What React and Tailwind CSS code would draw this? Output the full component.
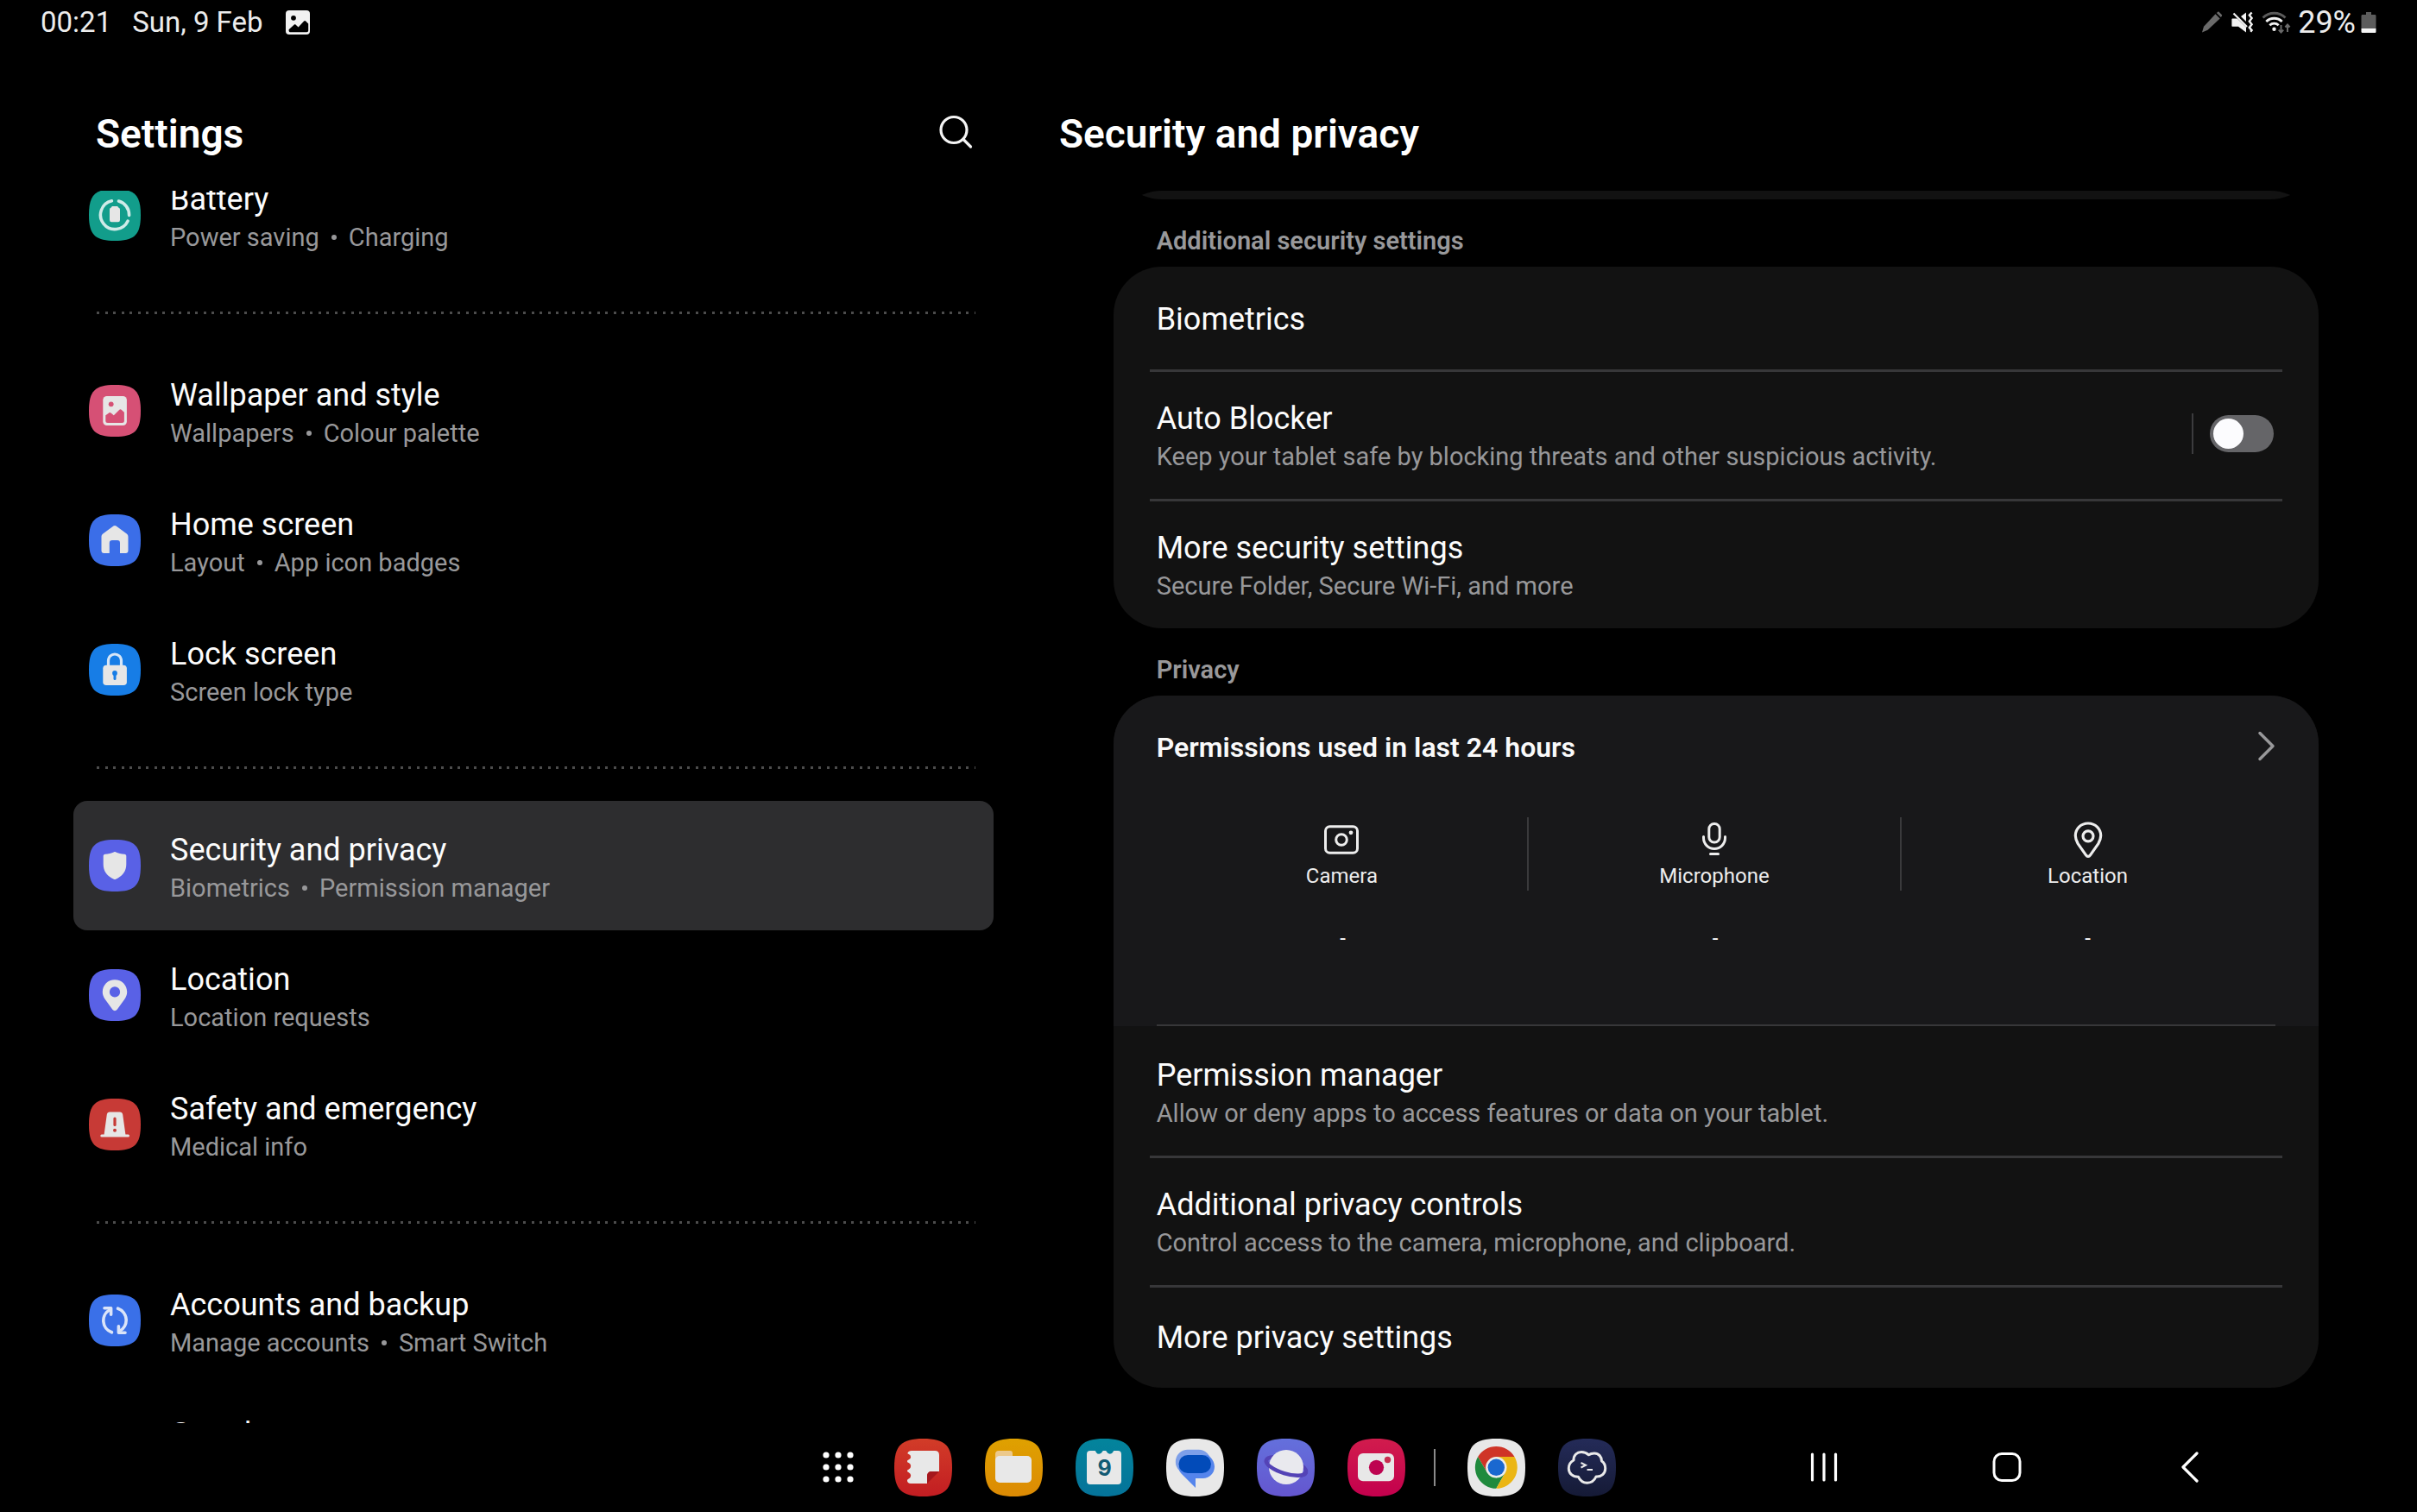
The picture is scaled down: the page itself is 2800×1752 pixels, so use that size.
import React, { useState } from "react";

const SQUIRCLE = "M30 0C7 0 0 7 0 30s7 30 30 30 30-7 30-30S53 0 30 0z";

function Tile({ color, children }) {
  return (
    <svg viewBox="0 0 60 60" className="h-[60px] w-[60px] shrink-0" aria-hidden="true">
      <path d={SQUIRCLE} fill={color} />
      {children}
    </svg>
  );
}

const INK = "#e6e6e6";

const BatteryIcon = () => (
  <Tile color="#129d8b">
    <g fill="none" stroke="#cfebe8" strokeWidth="3.6" strokeLinecap="round">
      <path d="M34.5 14A16.6 16.6 0 0 1 46.6 30.5" />
      <path d="M45 37.2A16.6 16.6 0 1 1 26.4 13.8" />
    </g>
    <path d="M27.5 20h5c.8 0 1.4.6 1.4 1.3C35.3 21.7 36 22.6 36 24v12a2.2 2.2 0 0 1-2.2 2.2h-7.6A2.2 2.2 0 0 1 24 36V24c0-1.400.7-2.300 2.100-2.700 0-.7.600-1.300 1.400-1.300z" fill={INK} />
  </Tile>
);

const WallpaperIcon = () => (
  <Tile color="#d65075">
    <rect x="16.3" y="13" width="27.6" height="34" rx="4.5" fill={INK} />
    <circle cx="25.7" cy="22.3" r="2.9" fill="#d65075" />
    <path d="M19.3 35.2l3.9-2.700c.8-.6 1.600-.5 2.300.1l3.300 2.600 6.300-6.300c.8-.8 1.700-.8 2.500-.1l3.300 3V41.500a2.500 2.500 0 0 1-2.500 2.500H21.800a2.500 2.500 0 0 1-2.500-2.500z" fill="#d65075" />
  </Tile>
);

const HomeIcon = () => (
  <Tile color="#3b6ee8">
    <path d="M31.6 13.6l12.2 9c1.100.9 1.700 2 1.700 3.400v16c0 2-1 3-3 3H36V33.200c0-2-1-3.200-3-3.200h-6c-2 0-3.200 1.200-3.200 3.200V45h-6.300c-2 0-3-1-3-3V26c0-1.400.6-2.500 1.700-3.400l12.200-9c1-.8 2.200-.8 3.200 0z" fill={INK} />
  </Tile>
);

const LockIcon = () => (
  <Tile color="#177de6">
    <path d="M22.5 26v-6.500a7.500 7.500 0 0 1 15 0V26" fill="none" stroke="#d6e6f8" strokeWidth="3.2" />
    <rect x="16.3" y="24.7" width="27.6" height="23.3" rx="3.8" fill={INK} />
    <circle cx="30" cy="34" r="2.9" fill="#177de6" />
    <path d="M30 34v6.500" stroke="#177de6" strokeWidth="3" strokeLinecap="round" />
  </Tile>
);

const ShieldIcon = () => (
  <Tile color="#5961e6">
    <path d="M30.8 14.200c3.300 1.500 6.700 2.300 10.300 2.600 1.400.1 2.200.9 2.200 2.200v9.500c0 8.300-4.700 13.800-12.200 17.300-.8.300-1.400.3-2.200 0C21.400 42.300 16.700 36.800 16.700 28.500V19c0-1.300.8-2.100 2.200-2.200 3.600-.3 7-1.100 10.300-2.600.6-.3 1-.3 1.600 0z" fill={INK} />
  </Tile>
);

const PinIcon = () => (
  <Tile color="#5961e6">
    <path fillRule="evenodd" d="M30 12.200c8 0 14.200 6.200 14.200 14 0 3.300-1.100 6-3 8.900l-8.500 11.600c-1.500 1.900-3.900 1.900-5.400 0l-8.500-11.600c-1.900-2.900-3-5.600-3-8.900 0-7.800 6.200-14 14.200-14zm0 8.100a6.100 6.100 0 1 0 0 12.200 6.100 6.100 0 0 0 0-12.200z" fill={INK} />
  </Tile>
);

const SirenIcon = () => (
  <Tile color="#c73a36">
    <path d="M24.300 15.600h11.400c2 0 3.200 1 3.500 3l3.200 22.900h3.100a1.500 1.500 0 0 1 0 3H14.800a1.500 1.500 0 0 1 0-3h2.800l3.200-22.900c.3-2 1.500-3 3.500-3z" fill={INK} />
    <path d="M30 23v7.500" stroke="#c73a36" strokeWidth="3.2" strokeLinecap="round" />
    <circle cx="30" cy="36.7" r="2" fill="#c73a36" />
  </Tile>
);

const SyncIcon = () => (
  <Tile color="#3a70e8">
    <g fill="none" stroke="#dbe4f8" strokeWidth="3.6" strokeLinecap="round" strokeLinejoin="round">
      <path d="M26.400 43.800A14.400 14.400 0 0 1 24.500 17.500" />
      <path d="M18 15.700h7.600v7.600" />
      <path d="M33.600 16.200a14.400 14.400 0 0 1 1.900 26.300" />
      <path d="M42 44.300h-7.600v-7.600" />
    </g>
  </Tile>
);

const GoogleIcon = () => (
  <Tile color="#3a70e8">
    <circle cx="30" cy="30" r="12" fill="none" stroke={INK} strokeWidth="4" />
  </Tile>
);

const GROUPS = [
  [{ id: "battery", title: "Battery", sub: ["Power saving", "Charging"], icon: <BatteryIcon /> }],
  [
    { id: "wallpaper", title: "Wallpaper and style", sub: ["Wallpapers", "Colour palette"], icon: <WallpaperIcon /> },
    { id: "home", title: "Home screen", sub: ["Layout", "App icon badges"], icon: <HomeIcon /> },
    { id: "lock", title: "Lock screen", sub: ["Screen lock type"], icon: <LockIcon /> },
  ],
  [
    { id: "security", title: "Security and privacy", sub: ["Biometrics", "Permission manager"], icon: <ShieldIcon /> },
    { id: "location", title: "Location", sub: ["Location requests"], icon: <PinIcon /> },
    { id: "safety", title: "Safety and emergency", sub: ["Medical info"], icon: <SirenIcon /> },
  ],
  [
    { id: "accounts", title: "Accounts and backup", sub: ["Manage accounts", "Smart Switch"], icon: <SyncIcon /> },
    { id: "google", title: "Google", sub: ["Google services"], icon: <GoogleIcon /> },
  ],
];

function StatusBar() {
  return (
    <header className="flex h-[52px] shrink-0 items-center justify-between px-[47px] text-[33px] leading-[40px] text-[#ececec]">
      <div className="flex items-center">
        <span>00:21</span>
        <span className="ml-[24px]">Sun, 9 Feb</span>
        <svg viewBox="0 0 28 28" className="ml-[26px] h-[28px] w-[28px]" aria-hidden="true">
          <rect width="28" height="28" rx="4" fill="#f2f2f2" />
          <circle cx="9" cy="8.8" r="2.9" fill="#000" />
          <path d="M3.600 22.300l6-5.600c.7-.6 1.400-.6 2.100 0l2.900 2.700 6.500-7c.7-.7 1.400-.7 2.100 0l3 3.200v7.600c0 1.300-.7 2-2 2H5.600c-1.300 0-2-.7-2-1.500z" fill="#000" />
        </svg>
      </div>
      <div className="flex items-center">
        <svg viewBox="0 0 26 26" className="h-[26px] w-[26px]" aria-hidden="true">
          <path d="M17.500 3.200l5.200 5.200L8.500 21.700 2 24.500l2-6.800z" fill="#6a6a6a" />
          <path d="M18.800 2l1.300-1.100c.6-.5 1.200-.4 1.700.1l3 3c.5.500.5 1.100 0 1.700L23.800 7z" fill="#6a6a6a" />
        </svg>
        <svg viewBox="0 0 26 26" className="ml-[10px] h-[26px] w-[26px]" aria-hidden="true">
          <path d="M1.500 8.500h5.300L17 18.600V24.500L8 17.800H1.500C.7 17.800.4 17.400.4 16.700V9.600c0-.7.3-1.100 1.100-1.100z" fill="#f2f2f2" />
          <path d="M11 6l6-4.500v10.600z" fill="#f2f2f2" />
          <path d="M2.500 2.500L18 18" stroke="#f2f2f2" strokeWidth="2.2" />
          <path d="M23.600 1.500l-2.800 3 2.800 3.600-2.800 3.600 2.800 3.600-2.800 3.600 2.800 3.200-1.400 1.700" fill="none" stroke="#f2f2f2" strokeWidth="2.4" />
        </svg>
        <svg viewBox="0 0 34 26" className="ml-[9px] h-[26px] w-[34px]" aria-hidden="true">
          <path d="M1.500 7.600a18.500 18.500 0 0 1 26 0" fill="none" stroke="#5a5a5a" strokeWidth="2.8" />
          <path d="M5.300 12a13.200 13.200 0 0 1 18.400 0M9.300 16.200a7.500 7.500 0 0 1 10.400 0" fill="none" stroke="#f2f2f2" strokeWidth="2.8" />
          <circle cx="14.5" cy="20.7" r="2.2" fill="#f2f2f2" />
          <path d="M22.500 16v8M19.800 21.600l2.700 2.900 2.700-2.900M30 24v-8M27.300 18.400l2.700-2.900 2.700 2.900" fill="none" stroke="#6a6a6a" strokeWidth="2" />
        </svg>
        <span className="ml-[8px] text-[36px]">29%</span>
        <svg viewBox="0 0 18 26" className="ml-[6px] h-[26px] w-[18px]" aria-hidden="true">
          <path d="M6 1h6v3h4c1 0 1.500.5 1.500 1.500V20H.5V5.500C.5 4.500 1 4 2 4h4z" fill="#5c5c5c" />
          <path d="M.5 20h17v3.500c0 1-.5 1.500-1.500 1.500H2c-1 0-1.500-.5-1.500-1.500z" fill="#f5f5f5" />
        </svg>
      </div>
    </header>
  );
}

function Dot() {
  return <span className="mx-[14px] h-[6px] w-[6px] rounded-full bg-[#98989a]" />;
}

function NavRow({ item, selected, onSelect }) {
  return (
    <li>
      <button
        type="button"
        aria-current={selected ? "page" : undefined}
        onClick={onSelect}
        className={
          "flex w-full items-center gap-[34px] rounded-[16px] px-[18px] py-[29px] text-left " +
          (selected ? "bg-[#2d2d2f]" : "")
        }
      >
        {item.icon}
        <span className="flex flex-col pt-1">
          <span className="text-[36px] leading-[48px] text-[#fcfcfc]">{item.title}</span>
          <span className="flex items-center text-[29px] leading-[40px] text-[#98989a]">
            {item.sub.map((s, i) => (
              <React.Fragment key={s}>
                {i > 0 && <Dot />}
                <span>{s}</span>
              </React.Fragment>
            ))}
          </span>
        </span>
      </button>
    </li>
  );
}

function Sidebar() {
  const [selected, setSelected] = useState("security");
  return (
    <aside className="flex min-h-0 flex-col pr-[25px] pl-[85px]">
      <div className="flex shrink-0 items-center justify-between pt-[75px] pr-[24px] pb-[38px] pl-[26px]">
        <h1 className="text-[46px] leading-[56px] font-semibold text-white">Settings</h1>
        <button type="button" aria-label="Search">
          <svg viewBox="0 0 40 44" className="h-[44px] w-[40px]" fill="none" stroke="#f4f4f4" strokeWidth="3.2" strokeLinecap="round">
            <circle cx="18" cy="17.5" r="15" />
            <path d="M29 28.500l8.500 8.500" />
          </svg>
        </button>
      </div>
      <nav className="min-h-0 flex-1 overflow-hidden" aria-label="Settings">
        <div className="-mt-[47px]">
          {GROUPS.map((group, g) => (
            <React.Fragment key={g}>
              {g > 0 && (
                <div className="flex h-[77px] items-center pr-[21px] pl-[27px]">
                  <div className="h-[3px] w-full bg-[linear-gradient(90deg,#4c4c4c_0_3px,transparent_3px_10px,#4c4c4c_10px_13px,transparent_13px)] bg-[length:19px_3px]" />
                </div>
              )}
              <ul>
                {group.map((item) => (
                  <NavRow key={item.id} item={item} selected={item.id === selected} onSelect={() => setSelected(item.id)} />
                ))}
              </ul>
            </React.Fragment>
          ))}
        </div>
      </nav>
    </aside>
  );
}

function RowText({ title, sub }) {
  return (
    <span className="flex flex-col">
      <span className="text-[36px] leading-[48px] text-[#fcfcfc]">{title}</span>
      {sub && <span className="text-[29px] leading-[40px] text-[#98989a]">{sub}</span>}
    </span>
  );
}

function SectionLabel({ children }) {
  return <h3 className="pt-[28px] pb-[10px] pl-[50px] text-[29px] leading-[40px] font-semibold text-[#98989a]">{children}</h3>;
}

function CameraOutline() {
  return (
    <svg viewBox="0 0 44 44" className="h-[44px] w-[44px]" fill="none" stroke="#ededed" strokeWidth="3" aria-hidden="true">
      <rect x="3.5" y="6.8" width="37" height="30.4" rx="5" />
      <circle cx="22" cy="22" r="6.3" />
      <circle cx="33" cy="13.8" r="2.4" fill="#ededed" stroke="none" />
    </svg>
  );
}

function MicOutline() {
  return (
    <svg viewBox="0 0 44 44" className="h-[44px] w-[44px]" fill="none" stroke="#ededed" strokeWidth="3" strokeLinecap="round" aria-hidden="true">
      <rect x="15.8" y="3.5" width="12.4" height="21.5" rx="6" />
      <path d="M9.500 18.500v1.500a12.500 12.500 0 0 0 25 0v-1.500" />
      <path d="M17.500 38.500h9" />
    </svg>
  );
}

function PinOutline() {
  return (
    <svg viewBox="0 0 44 44" className="h-[44px] w-[44px]" fill="none" stroke="#ededed" strokeWidth="3.2" strokeLinejoin="round" aria-hidden="true">
      <path d="M22 3c8.300 0 14.700 6.300 14.700 14.300 0 3.300-1.200 6.300-2.900 9.300l-9.300 13.300c-1.400 2-3.600 2-5 0l-9.300-13.300c-1.700-3-2.900-6-2.900-9.300C7.300 9.300 13.700 3 22 3z" />
      <circle cx="22" cy="17.8" r="6" />
    </svg>
  );
}

const USAGE = [
  { name: "Camera", icon: <CameraOutline />, value: "-" },
  { name: "Microphone", icon: <MicOutline />, value: "-" },
  { name: "Location", icon: <PinOutline />, value: "-" },
];

function AutoBlockerRow() {
  const [on, setOn] = useState(false);
  return (
    <li className="mx-[42px] flex items-start justify-between border-t-[3px] border-[#373739] px-2 pt-[30px] pb-[29px]">
      <label htmlFor="auto-blocker" className="cursor-pointer">
        <RowText title="Auto Blocker" sub="Keep your tablet safe by blocking threats and other suspicious activity." />
      </label>
      <div className="flex items-center gap-[19px] pt-[18px] pr-[2px]">
        <span className="h-[47px] w-[2px] bg-[#3c3c3e]" />
        <input
          id="auto-blocker"
          type="checkbox"
          role="switch"
          checked={on}
          onChange={(e) => setOn(e.target.checked)}
          className="flex h-[43px] w-[74px] cursor-pointer appearance-none items-center rounded-full bg-[#656568] px-1 before:block before:h-[35px] before:w-[35px] before:rounded-full before:bg-[#fcfcfe] before:content-[''] checked:justify-end checked:bg-[#3b6ee8]"
        />
      </div>
    </li>
  );
}

function Detail() {
  return (
    <main className="flex min-h-0 flex-col">
      <div className="shrink-0 pt-[75px] pb-[38px] pl-[51px]">
        <h2 className="text-[46px] leading-[56px] font-semibold text-white">Security and privacy</h2>
      </div>
      <div className="mx-[7%] min-h-0 flex-1 overflow-hidden rounded-t-[56px]">
        <div className="-mt-[110px] h-[120px] rounded-[56px] bg-[#121212]" />

        <SectionLabel>Additional security settings</SectionLabel>
        <ul className="rounded-[56px] bg-[#121212]">
          <li>
            <button type="button" className="block w-full px-[50px] pt-[37px] pb-[34px] text-left">
              <RowText title="Biometrics" />
            </button>
          </li>
          <AutoBlockerRow />
          <li className="mx-[42px] border-t-[3px] border-[#373739]">
            <button type="button" className="block w-full px-2 pt-[30px] pb-[29px] text-left">
              <RowText title="More security settings" sub="Secure Folder, Secure Wi-Fi, and more" />
            </button>
          </li>
        </ul>

        <SectionLabel>Privacy</SectionLabel>
        <div className="overflow-hidden rounded-[56px] bg-[#121212]">
          <section className="bg-[#18181a] px-[50px]">
            <button type="button" className="flex w-full items-center justify-between pt-[40px] pb-[61px] text-left">
              <span className="text-[32px] leading-[40px] font-semibold text-[#fafafa]">Permissions used in last 24 hours</span>
              <svg viewBox="0 0 24 40" className="h-[40px] w-[24px]" fill="none" stroke="#98989a" strokeWidth="3.5" strokeLinecap="round" strokeLinejoin="round" aria-hidden="true">
                <path d="M6 3.500L21 18.500 6 33.500" />
              </svg>
            </button>
            <div className="border-b-2 border-[#373739] pr-[2px] pb-[84px]">
              <dl className="grid grid-cols-3 text-center">
                {USAGE.map((u, i) => (
                  <div key={u.name}>
                    <dt className={"flex flex-col items-center gap-1 border-[#3a3a3c] pt-1 pb-px " + (i < 2 ? "border-r-2" : "")}>
                      {u.icon}
                      <span className="text-[24px] leading-[32px] text-[#ededed]">{u.name}</span>
                    </dt>
                    <dd className="mt-[39px] text-[24px] leading-[32px] text-white">{u.value}</dd>
                  </div>
                ))}
              </dl>
            </div>
          </section>
          <ul>
            <li>
              <button type="button" className="block w-full px-[50px] pt-[33px] pb-[29px] text-left">
                <RowText title="Permission manager" sub="Allow or deny apps to access features or data on your tablet." />
              </button>
            </li>
            <li className="mx-[42px] border-t-[3px] border-[#373739]">
              <button type="button" className="block w-full px-2 pt-[30px] pb-[29px] text-left">
                <RowText title="Additional privacy controls" sub="Control access to the camera, microphone, and clipboard." />
              </button>
            </li>
            <li className="mx-[42px] border-t-[3px] border-[#373739]">
              <button type="button" className="block w-full px-2 pt-[34px] pb-[34px] text-left">
                <RowText title="More privacy settings" />
              </button>
            </li>
          </ul>
        </div>
      </div>
    </main>
  );
}

const APP_SHAPE = "M33.500 0C8 0 0 8 0 33.500S8 67 33.500 67 67 59 67 33.500 59 0 33.500 0z";

function AppIcon({ name, from, to, children }) {
  const id = "tile-" + name.toLowerCase();
  return (
    <button type="button" aria-label={name} className="shrink-0">
      <svg viewBox="0 0 67 67" className="h-[67px] w-[67px]" aria-hidden="true">
        <defs>
          <linearGradient id={id} x1="0" y1="0" x2="0" y2="1">
            <stop offset="0" stopColor={from} />
            <stop offset="1" stopColor={to} />
          </linearGradient>
        </defs>
        <path d={APP_SHAPE} fill={`url(#${id})`} />
        {children}
      </svg>
    </button>
  );
}

function Taskbar() {
  return (
    <footer className="flex h-[103px] shrink-0 items-center justify-between pr-[243px] pb-px pl-[34%]">
      <div className="flex items-center">
        <button type="button" aria-label="All apps" className="mr-[46px]">
          <svg viewBox="0 0 38 38" className="h-[38px] w-[38px]" fill="#fff" aria-hidden="true">
            {[5, 19, 33].map((y) => [5, 19, 33].map((x) => <circle key={x + "-" + y} cx={x} cy={y} r="3.6" />))}
          </svg>
        </button>
        <div className="flex items-center gap-[38px]">
          <AppIcon name="Notes" from="#d23c28" to="#c21d22">
            <path d="M20 14h27c3.300 0 5 1.700 5 5v19h-8.500c-3.500 0-5.500 2-5.500 5.500V52H19c-2.500 0-4-1.300-4-3.200 0-1.200.8-1.900 1.800-2.300a4 4 0 0 0 0-7.300c-1-.4-1.800-1-1.800-1.900s.8-1.400 1.800-1.900a4 4 0 0 0 0-7.300c-1-.4-1.800-1-1.800-1.900s.8-1.400 1.800-1.900a3.300 3.300 0 0 0 0-6.300c-1-.4-1.500-.7-1.300-1.600.5-1.500 2.200-2.400 4.500-2.400z" fill="#e8e8e8" />
            <path d="M52 38L38 52v-8.500c0-3.500 2-5.500 5.500-5.500z" fill="#a5171d" />
          </AppIcon>
          <AppIcon name="Files" from="#dfa100" to="#dc8a04">
            <path d="M16 14h13c2 0 3 1 3 3v9H12v-8c0-2.500 1.500-4 4-4z" fill="#ecc98c" />
            <rect x="12" y="20" width="42" height="31" rx="5" fill="#e8e8e8" />
          </AppIcon>
          <AppIcon name="Calendar" from="#03849c" to="#05739a">
            <path d="M17 14h5c1 0 1.300.6 1.500 1.300a4 4 0 0 0 7.400 0c.2-.7.700-1.300 1.700-1.300h1.800c1 0 1.500.6 1.700 1.300a4 4 0 0 0 7.400 0c.2-.7.500-1.300 1.500-1.300h4c2.700 0 4 1.300 4 4v31c0 2.700-1.300 4-4 4H17c-2.700 0-4-1.300-4-4V18c0-2.700 1.300-4 4-4z" fill="#e8e8e8" />
            <text x="33.5" y="43" textAnchor="middle" fontFamily="Inter, sans-serif" fontSize="25" fontWeight="700" fill="#125a73">9</text>
          </AppIcon>
          <AppIcon name="Messages" from="#e8e8e8" to="#e8e8e8">
            <path d="M25 12.700h12.500a14 14 0 0 1 14 14V41H25a14 14 0 0 1 0-28.300z" fill="#7d9fe9" />
            <path d="M28 19h20c4.500 2.500 8 8 8 13.500A13.500 13.500 0 0 1 42.500 46H34v11L17.500 40.500C15 38 14.500 35.500 14.500 32z" fill="#5585ec" />
            <rect x="14.5" y="19" width="37.5" height="21" rx="10.5" fill="#024bb9" />
          </AppIcon>
          <AppIcon name="Internet" from="#6470dc" to="#6456cf">
            <ellipse cx="34" cy="32" rx="24" ry="8.5" transform="rotate(17 34 32)" fill="none" stroke="#5443b6" strokeWidth="4.5" />
            <circle cx="34" cy="33" r="20" fill="#e9e9ee" />
            <g transform="rotate(17 34 32)">
              <path d="M10 32a24 8.500 0 0 0 48 0" fill="none" stroke="#5443b6" strokeWidth="4.5" />
            </g>
          </AppIcon>
          <AppIcon name="Camera" from="#d11c4d" to="#c3004d">
            <rect x="12" y="17" width="42" height="32.3" rx="6" fill="#e8e8e8" />
            <circle cx="33.5" cy="33.3" r="8.6" fill="#bd0350" />
            <circle cx="46.5" cy="24.5" r="3.7" fill="#c82e4f" />
          </AppIcon>
        </div>
        <span className="mr-[37px] ml-[33px] h-[43px] w-[2px] bg-[#8a8a8a]" />
        <div className="flex items-center gap-[38px]">
          <AppIcon name="Chrome" from="#e8e8e8" to="#e8e8e8">
            <g transform="translate(33.3 33.3)">
              <path d="M-21.200-12.200A24.500 24.500 0 0 1 21.200-12.200H0L-10.500 6z" fill="#cf3427" />
              <path d="M-21.200-12.200L-10.500 6 0 12.200 10.500 6 0 24.500A24.500 24.500 0 0 1-21.200-12.200z" fill="#1f8a3d" />
              <path d="M21.200-12.200A24.500 24.500 0 0 1 0 24.500L10.500 6 0-12.200z" fill="#ebb614" />
              <circle r="12.2" fill="#ececec" />
              <circle r="9.7" fill="#1a68d0" />
            </g>
          </AppIcon>
          <AppIcon name="Terminal" from="#242b58" to="#151a36">
            <path d="M18 25C17.800 19 22 15.500 27 15.500c3.500 0 6.200 1.200 8.500 3.300C37.500 17.300 39.500 17 42 17c5 0 8.500 4 8.500 9 2.800 1.800 4.200 4.800 4.200 8.500 0 6-4.500 10-10.700 9.500C42 48.500 38.500 51.200 33.700 51.200S25.500 48.500 23.500 44.300C17 44.500 12.300 40.500 12.300 34.500c0-4 2.200-7.700 5.700-9.500z" fill="none" stroke="#eaeaea" strokeWidth="3" strokeLinejoin="round" />
            <path d="M26.500 28l5.500 2.700-5.500 2.800M33.500 36h6.500" fill="none" stroke="#eaeaea" strokeWidth="2" />
          </AppIcon>
        </div>
      </div>
      <div className="flex items-center gap-[172px]">
        <button type="button" aria-label="Recent apps">
          <svg viewBox="0 0 40 40" className="h-[40px] w-[40px]" stroke="#fff" strokeWidth="3.2" strokeLinecap="round">
            <path d="M6.500 5v30M20 5v30M33.500 5v30" />
          </svg>
        </button>
        <button type="button" aria-label="Home">
          <svg viewBox="0 0 40 40" className="h-[40px] w-[40px]" fill="none" stroke="#fff" strokeWidth="3">
            <rect x="5" y="4.5" width="30" height="31" rx="9" />
          </svg>
        </button>
        <button type="button" aria-label="Back">
          <svg viewBox="0 0 40 40" className="h-[40px] w-[40px]" fill="none" stroke="#fff" strokeWidth="3.2" strokeLinecap="round" strokeLinejoin="round">
            <path d="M28 4L12 20l16 16" />
          </svg>
        </button>
      </div>
    </footer>
  );
}

export default function App() {
  return (
    <div className="flex h-screen flex-col overflow-hidden bg-black font-[Roboto,sans-serif]">
      <StatusBar />
      <div className="grid min-h-0 flex-1 grid-cols-[42%_58%] grid-rows-1">
        <Sidebar />
        <Detail />
      </div>
      <Taskbar />
    </div>
  );
}
